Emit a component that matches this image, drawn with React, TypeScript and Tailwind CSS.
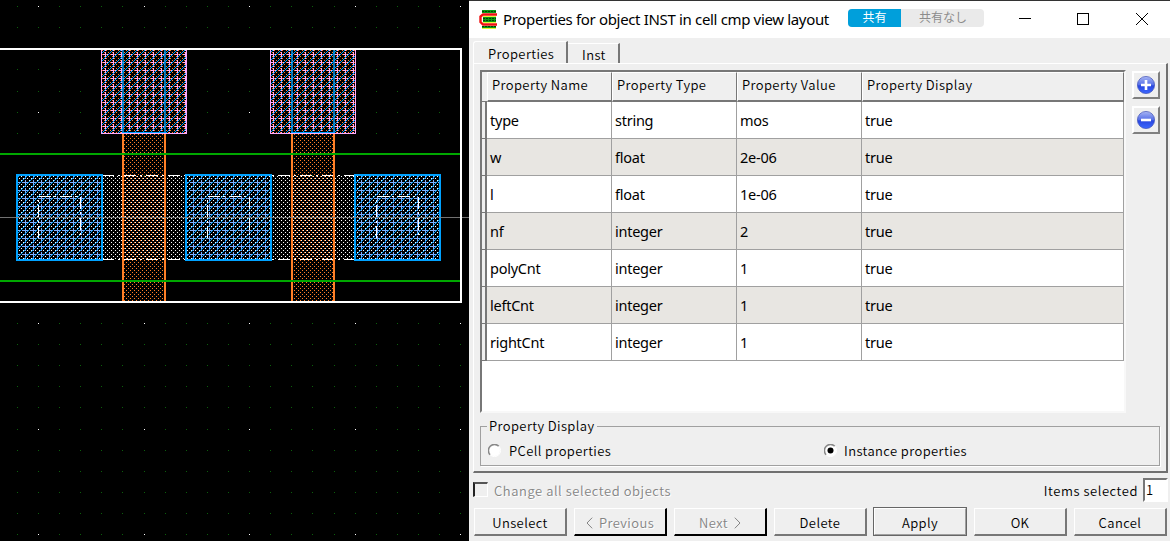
import React from "react";

const CROSS = ["...#....", "...#....", "#######.", "...#....", "...#....", "........", "...#....", "........"];
const DIAG = [".......#", "......#.", ".....#..", "....#...", "...#....", "..#.....", ".#......", "#......."];
const DOTS = ["#...", "....", "..#.", "...."];

type StippleProps = { x: number; y: number; w: number; h: number; rows: string[]; color: string; ox?: number; oy?: number };

// Fills a rectangle with a repeated bit mask, merging neighbouring pixels of a row into one run.
function Stipple({ x, y, w, h, rows, color, ox = 0, oy = 0 }: StippleProps) {
  const n = rows.length;
  let d = "";
  for (let j = y; j < y + h; j++) {
    const row = rows[(((j - oy) % n) + n) % n];
    const m = row.length;
    let run = 0;
    for (let i = x; i <= x + w; i++) {
      const on = i < x + w && row[(((i - ox) % m) + m) % m] === "#";
      if (on) run++;
      else if (run) {
        d += `M${i - run} ${j}h${run}v1h-${run}z`;
        run = 0;
      }
    }
  }
  return <path d={d} fill={color} />;
}

function Grid() {
  const dots: React.ReactNode[] = [];
  for (let i = 0; i < 22; i++)
    for (let j = 0; j < 26; j++) {
      const major = i % 5 === 1 && j % 5 === 0;
      dots.push(
        <rect key={`${i}-${j}`} x={Math.floor(17.3 + i * 21.12)} y={Math.floor(6.6 + j * 21.12)} width="1" height="1" fill={major ? "#fff" : "#0b5f0b"} />
      );
    }
  return <>{dots}</>;
}

function Poly({ x }: { x: number }) {
  return (
    <g>
      <Stipple x={x} y={134} w={44} h={167} rows={DOTS} color="#ff7f27" />
      <rect x={x} y="133" width="2" height="168" fill="#ff7f27" />
      <rect x={x + 42} y="133" width="2" height="168" fill="#ff7f27" />
    </g>
  );
}

function Gate({ x }: { x: number }) {
  const area = { x, y: 50, w: 86, h: 83 };
  return (
    <g>
      <rect x={x} y="50" width="86" height="84" fill="#000" />
      <Stipple {...area} rows={CROSS} color="#ffaaff" ox={-2} oy={4} />
      <Stipple {...area} rows={DIAG} color="#00a2ff" ox={3} oy={0} />
      <Stipple {...area} rows={DOTS} color="#ff7f27" />
      <rect x={x + 21} y="50" width="2" height="83" fill="#00a2ff" fillOpacity=".7" />
      <rect x={x + 63} y="50" width="2" height="83" fill="#00a2ff" fillOpacity=".7" />
      <path d={`M${x + 21} 132.5h44`} stroke="#00a2ff" />
      <path d={`M${x + 0.5} 50v83.5h85V50`} stroke="#ffaaff" fill="none" />
    </g>
  );
}

function Contact({ x }: { x: number }) {
  const area = { x, y: 175, w: 86, h: 85 };
  return (
    <g>
      <rect x={x} y="174" width="86" height="86" fill="#000" />
      <Stipple {...area} rows={DOTS} color="#fff" ox={1} oy={0} />
      <Stipple {...area} rows={CROSS} color="#80b0ff" ox={-2} oy={4} />
      <Stipple {...area} rows={DIAG} color="#00a2ff" ox={3} oy={0} />
      <path d={`M${x + 22.5} 238v-41.5h42V238`} stroke="#fff" fill="none" strokeDasharray="12 3 2 4" />
      <rect x={x + 1} y="175" width="85" height="85" fill="none" stroke="#00a2ff" strokeWidth="2" />
    </g>
  );
}

function Canvas() {
  return (
    <svg width="469" height="541" viewBox="0 0 469 541" shapeRendering="crispEdges" className="block shrink-0 bg-black">
      <Grid />
      <Stipple x={102} y={176} w={338} h={84} rows={DOTS} color="#fff" ox={1} oy={0} />
      <path d="M102 175.5h252M102 259.5h252" stroke="#fff" strokeDasharray="12 4 2 4" />
      <Poly x={122} />
      <Poly x={291} />
      <Gate x={101} />
      <Gate x={270} />
      <Contact x={16} />
      <Contact x={185} />
      <Contact x={354} />
      <path d="M0 217.5h469" stroke="#858585" strokeOpacity=".85" />
      <path d="M0 154h460M0 281h460" stroke="#00a800" strokeWidth="2" />
      <path d="M0 49h461v253H0" stroke="#fff" strokeWidth="2" fill="none" />
    </svg>
  );
}

const ui = "font-['Noto_Sans_CJK_JP',sans-serif] font-[350] text-[13px] leading-4 tracking-[0.4px] whitespace-pre text-black";
const seg = "font-['Noto_Sans','Open_Sans',sans-serif] text-black whitespace-pre";

const rows = [
  ["type", "string", "mos"],
  ["w", "float", "2e-06"],
  ["l", "float", "1e-06"],
  ["nf", "integer", "2"],
  ["polyCnt", "integer", "1"],
  ["leftCnt", "integer", "1"],
  ["rightCnt", "integer", "1"],
];

function TitleBar() {
  return (
    <div className="flex h-[37px] shrink-0 items-center bg-white pl-[10px]">
      <svg width="19" height="19" viewBox="0 0 19 19" shapeRendering="crispEdges" className="mr-[5px] mb-[1px] shrink-0">
        <path d="M3 0h14v3H3zM4 7h13v5H4zM3 16h14v2H3z" fill="#0a9a12" />
        <path d="M3 1.500h14M4 8.500h13M4 10.500h13M3 16.500h14" stroke="#033f03" strokeDasharray="2 1" />
        <path d="M4 6.500h13M4 12.500h13M3 18.500h14" stroke="#e8f43a" />
        <path d="M18 4.500H4L1.500 6.500v5.500L4 14.500h14" stroke="#f01010" strokeWidth="2.400" fill="none" shapeRendering="auto" />
      </svg>
      <span className={`${seg} w-[345px] text-[15px] tracking-[-0.34px]`}>Properties for object INST in cell cmp view layout</span>
      <div className="mb-[3px] flex h-[18px] w-[136px] shrink-0 overflow-hidden rounded-[4px] bg-[#eaeaea] font-['Noto_Sans_CJK_JP',sans-serif] text-[12px] leading-[15px]">
        <span className="w-[53px] bg-[#009fdb] text-center text-white">共有</span>
        <span className="flex-1 pl-[1px] text-center text-[#8c8c8c]">共有なし</span>
      </div>
      <svg width="150" height="20" viewBox="0 0 150 20" className="mb-[1px] ml-[34px] shrink-0" fill="none" stroke="#000">
        <path d="M1 9.500h12M59.500 4.500h11v11h-11z" shapeRendering="crispEdges" />
        <path d="M118 4l12 12M130 4l-12 12" />
      </svg>
    </div>
  );
}

function RoundButton({ minus = false }: { minus?: boolean }) {
  return (
    <button className="flex h-7 w-7 items-center justify-center border-2 border-t-white border-l-white border-r-[#808080] border-b-[#808080] bg-[#efefef]">
      <svg width="18" height="18" viewBox="0 0 18 18" className="shrink-0">
        <defs>
          <linearGradient id="ball" x1="0" y1="0" x2="0" y2="1">
            <stop offset="0" stopColor="#a9b6f3" />
            <stop offset=".48" stopColor="#5770e8" />
            <stop offset=".55" stopColor="#2947e0" />
            <stop offset="1" stopColor="#3c68ff" />
          </linearGradient>
        </defs>
        <circle cx="9" cy="9" r="8.600" fill="url(#ball)" stroke="#3f50b8" strokeWidth=".7" />
        <path d={minus ? "M4 9h10" : "M4 9h10M9 4v10"} stroke="#fff" strokeWidth="2.600" />
      </svg>
    </button>
  );
}

function Table() {
  const cols = "grid grid-cols-[5px_125px_125px_125px_262px]";
  const heads = ["Property Name", "Property Type", "Property Value", "Property Display"];
  return (
    <div className="h-[343px] w-[646px] border-2 border-t-[#777] border-l-[#777] border-r-[#f8f8f8] border-b-[#f8f8f8] bg-white">
      <div className={`${cols} h-[30px]`}>
        <div className="border-b border-[#777] bg-[#efefef]" />
        {heads.map((h) => (
          <div key={h} className={`${ui} border-t border-l border-r border-b-2 border-t-white border-l-white border-r-[#777] border-b-[#777] bg-[#efefef] pt-[4px] pl-1`}>
            {h}
          </div>
        ))}
      </div>
      {rows.map((r, i) => (
        <div key={i} className={`${cols} h-[37px]`}>
          <div className="border-r-2 border-b border-[#777] bg-[#efefef]" />
          {[...r, "true"].map((c, k) => (
            <div
              key={k}
              className={`${seg} h-[37px] border-r border-b border-[#a0a0a0] pl-[3px] text-[14.5px] leading-[36px] tracking-[-0.25px] ${i % 2 ? "bg-[#e8e6e2]" : "bg-white"}`}
            >
              {c}
            </div>
          ))}
        </div>
      ))}
    </div>
  );
}

function Radio({ on = false }: { on?: boolean }) {
  return (
    <svg width="13" height="13" viewBox="0 0 13 13" className="mb-[2px] shrink-0" fill="none">
      <circle cx="6.500" cy="6.500" r="5.500" fill="#fff" />
      <path d="M2.200 10.800A6 6 0 0 1 10.800 2.200" stroke="#888" strokeWidth="1.500" />
      <path d="M10.800 2.200A6 6 0 0 1 2.200 10.800" stroke="#fff" />
      {on && <circle cx="6.500" cy="6.500" r="3" fill="#000" />}
    </svg>
  );
}

function Chevron({ right = false }: { right?: boolean }) {
  return (
    <svg width="7" height="12" viewBox="0 0 7 12" className="shrink-0" fill="none" stroke="#858585">
      <path d={right ? "M.8 .7L6 6L.8 11.300" : "M6.200 .7L1 6L6.200 11.300"} />
    </svg>
  );
}

const buttons = [
  ["Unselect", ""],
  ["Previous", "off"],
  ["Next", "off"],
  ["Delete", ""],
  ["Apply", "default"],
  ["OK", ""],
  ["Cancel", ""],
];

function buttonStyle(kind: string) {
  if (kind === "off") return "border-t-white border-l-white border-r-black border-b-black text-[#858585]! [text-shadow:1px_1px_0_#fff]";
  if (kind === "default") return "border-t-white border-l-white border-r-[#a0a0a0] border-b-[#a0a0a0] border-r! border-b! outline-1 outline-[#666] h-[27px]! w-[92px]! mr-px";
  return "border-t-white border-l-white border-r-[#777] border-b-[#777]";
}

export default function App() {
  return (
    <div className="flex h-[541px] w-[1170px] overflow-hidden bg-black">
      <Canvas />
      <div className="flex w-[701px] flex-col border-t border-[#333] bg-[#efefef]">
        <TitleBar />
        <div className="flex h-[25px] items-end pt-[3px] pl-1">
          <div className={`${ui} h-[22px] w-[95px] rounded-tl-[3px] border-t border-l border-r-2 border-t-white border-l-white border-r-[#777] pt-[4px] pl-[14px]`}>Properties</div>
          <div className={`${ui} h-5 w-[52px] border-t border-r-2 border-t-white border-r-[#777] pt-[3px] pl-[14px]`}>Inst</div>
        </div>
        <div className="ml-1 flex h-[410px] w-[695px] flex-col border-t border-r-2 border-b-2 border-l border-t-white border-l-white border-r-[#707070] border-b-[#707070] pt-[6px] pl-[6px]">
          <div className="flex gap-[6px]">
            <Table />
            <div className="flex flex-col gap-[7px] pt-px">
              <RoundButton />
              <RoundButton minus />
            </div>
          </div>
          <fieldset className="mt-[5px] h-[48px] w-[680px] border border-[#a0a0a0] shadow-[1px_1px_0_#fff]">
            <legend className={`${ui} ml-[6px] px-[2px]`}>Property Display</legend>
            <div className="flex items-center pt-[9px] pl-[7px]">
              <Radio />
              <span className={`${ui} ml-2 w-[315px]`}>PCell properties</span>
              <Radio on />
              <span className={`${ui} ml-[7px]`}>Instance properties</span>
            </div>
          </fieldset>
        </div>
        <div className="flex h-[34px] items-center pt-px pl-1">
          <div className="mb-[2px] h-[15px] w-[15px] border-t-2 border-r border-b border-l-2 border-t-[#555] border-l-[#222] border-r-white border-b-white" />
          <span className={`${ui} ml-[6px] flex-1 text-[#858585]! tracking-[0.55px]! [text-shadow:1px_1px_0_#fff]`}>Change all selected objects</span>
          <span className={`${ui} tracking-[0.55px]!`}>Items selected</span>
          <div className={`${ui} mr-[2px] mb-[2px] ml-[5px] h-6 w-[25px] border-2 border-t-[#777] border-l-[#777] border-r-white border-b-white bg-white pt-[2px] pl-px`}>1</div>
        </div>
        <div className="flex gap-[7px] pt-px pl-[5px]">
          {buttons.map(([label, kind]) => (
            <button key={label} className={`${ui} flex h-[28px] w-[93px] items-center justify-center gap-[6px] border-t border-l border-r-2 border-b-2 pt-[3px] ${buttonStyle(kind)}`}>
              {label === "Previous" && <Chevron />}
              {label}
              {label === "Next" && <Chevron right />}
            </button>
          ))}
        </div>
      </div>
    </div>
  );
}
